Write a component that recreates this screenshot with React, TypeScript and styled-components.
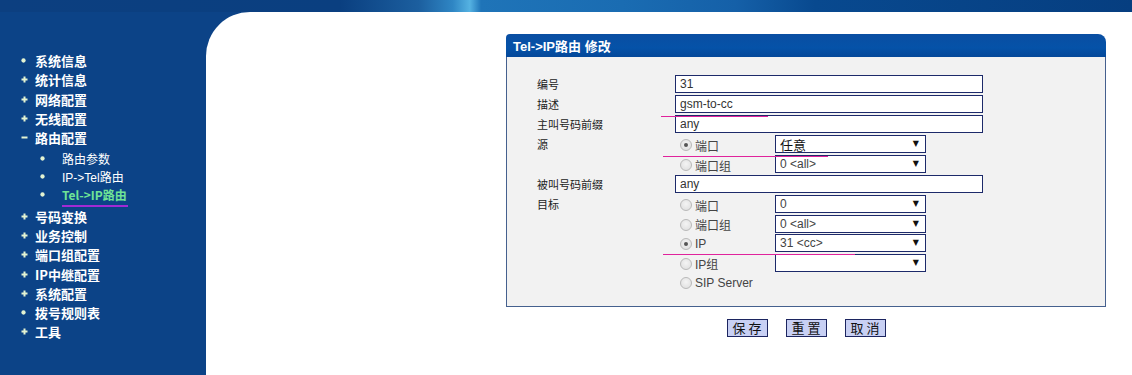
import React from 'react'
import styled, { createGlobalStyle } from 'styled-components'

const GlobalStyle = createGlobalStyle`
  html, body {
    margin: 0;
    padding: 0;
    background: #0c4387;
    overflow: hidden;
  }
  body {
    font-family: "Liberation Sans", "Noto Sans CJK SC", sans-serif;
  }
`

const Page = styled.div`
  display: flex;
  flex-direction: column;
  width: 1132px;
  height: 375px;
  background: #0c4387;
`

const Banner = styled.div`
  height: 12px;
  flex-shrink: 0;
  background: linear-gradient(
    90deg,
    #0c3f80 0%,
    #0a3f80 30%,
    #1c5f9f 37%,
    #2f86c4 40%,
    #55b2e2 41.5%,
    #1f74b8 42.5%,
    #1a6cb2 55%,
    #1560a8 65%,
    #08498f 72%,
    #063e80 100%
  );
`

const Main = styled.div`
  flex: 1;
  display: flex;
`

const Sidebar = styled.nav`
  width: 206px;
  flex-shrink: 0;
  padding-top: 39px;
  box-sizing: border-box;
`

const SubMenu = styled.div`
  padding: 2px 0 3px;
`

const NavItem = styled.div<{ $sub?: boolean; $active?: boolean }>`
  position: relative;
  display: flex;
  align-items: center;
  height: ${p => (p.$sub ? 18 : 19.3)}px;
  padding-left: ${p => (p.$sub ? 39 : 20)}px;
  color: ${p => (p.$active ? '#6fe396' : '#ffffff')};
  font-family: ${p => (p.$sub && !p.$active ? '"Liberation Sans", "Noto Sans CJK SC", sans-serif' : '"Noto Sans CJK SC", sans-serif')};
  font-size: ${p => (p.$sub ? 12 : 13)}px;
  font-weight: ${p => (p.$sub && !p.$active ? 400 : 700)};
  white-space: nowrap;
`

const Bullet = styled.span<{ $sub?: boolean }>`
  width: ${p => (p.$sub ? 22 : 14)}px;
  display: flex;
  align-items: center;
  justify-content: flex-start;
  padding-left: 1px;
`

const NavUnderline = styled.span`
  position: absolute;
  left: 62px;
  bottom: -4px;
  width: 66px;
  height: 2px;
  background: #a22ad4;
`

const Content = styled.main`
  flex: 1;
  background: #ffffff;
  border-top-left-radius: 44px;
  padding: 22px 0 0 300px;
  box-sizing: border-box;
`

const Panel = styled.section`
  width: 600px;
`

const PanelHeader = styled.div`
  height: 23px;
  display: flex;
  align-items: center;
  padding-left: 7px;
  color: #ffffff;
  font-family: "Liberation Sans", "Noto Sans CJK SC", sans-serif;
  font-weight: 700;
  font-size: 13px;
  background: linear-gradient(180deg, #0a4ea2 0%, #0552a8 60%, #04489a 100%);
  border-radius: 4px 8px 0 0;
`

const PanelBody = styled.div`
  position: relative;
  background: #f2f2f2;
  border: 1px solid #45608e;
  border-top: none;
  padding: 18px 0 13px 30px;
`

const FieldRow = styled.div`
  display: grid;
  grid-template-columns: 138px 308px;
  align-items: start;
`

const Label = styled.div`
  height: 20px;
  line-height: 18px;
  font-family: "Noto Sans CJK SC", sans-serif;
  font-size: 11px;
  color: #222;
`

const TextBox = styled.div`
  height: 18px;
  margin-bottom: 2px;
  box-sizing: border-box;
  border: 1px solid #1d2a6a;
  background: #fff;
  padding-left: 4px;
  font-size: 12px;
  line-height: 16px;
  color: #333;
`

const OptionList = styled.div`
  display: flex;
  flex-direction: column;
`

const OptionRow = styled.div<{ $tight?: boolean }>`
  display: grid;
  grid-template-columns: 100px 151px;
  height: ${p => (p.$tight ? 19.5 : 20)}px;
  align-items: start;
`

const RadioLabel = styled.label`
  display: flex;
  align-items: center;
  gap: 3px;
  height: 19px;
  padding-left: 5px;
  font-family: "Liberation Sans", "Noto Sans CJK SC", sans-serif;
  font-size: 12px;
  color: #444;
  padding-top: 1px;
  box-sizing: border-box;
`

const Radio = styled.span<{ $checked?: boolean }>`
  position: relative;
  width: 12px;
  height: 12px;
  border-radius: 50%;
  box-sizing: border-box;
  border: 1px solid #b9b9b9;
  background: radial-gradient(circle at 50% 40%, #f4f4f4 0%, #dcdcdc 100%);

  &::after {
    content: '';
    display: ${p => (p.$checked ? 'block' : 'none')};
    position: absolute;
    left: 3px;
    top: 3px;
    width: 4px;
    height: 4px;
    border-radius: 50%;
    background: #555;
  }
`

const SelectBox = styled.div<{ $big?: boolean }>`
  height: 18px;
  box-sizing: border-box;
  border: 1px solid #1d2a6a;
  background: #fff;
  display: flex;
  align-items: center;
  justify-content: space-between;
  padding: 0 6px 0 4px;
  font-family: ${p => (p.$big ? '"Noto Sans CJK SC", sans-serif' : '"Liberation Sans", "Noto Sans CJK SC", sans-serif')};
  font-size: ${p => (p.$big ? 13 : 12)}px;
  color: ${p => (p.$big ? '#111' : '#444')};
`

const Arrow = styled.span`
  font-family: "DejaVu Sans", sans-serif;
  font-size: 8px;
  line-height: 8px;
  color: #111;
`

const Mark = styled.span`
  position: absolute;
  z-index: 2;
  height: 1px;
  background: #e0239c;
`

const Buttons = styled.div`
  width: 600px;
  display: flex;
  justify-content: center;
  gap: 18px;
  margin-top: 12px;
`

const Button = styled.button`
  width: 41px;
  height: 18px;
  padding: 0;
  border: 1px solid #1c2560;
  background: #c8d0f4;
  font-family: "Noto Sans CJK SC", sans-serif;
  font-size: 13px;
  line-height: 15px;
  letter-spacing: 3px;
  text-indent: 3px;
  color: #111;
`

const PlusIcon = () => (
  <svg width="7" height="7" viewBox="0 0 7 7">
    <path d="M3.5 0.5v6M0.5 3.5h6" stroke="#e4f4d2" strokeWidth="2" />
  </svg>
)

const MinusIcon = () => (
  <svg width="7" height="7" viewBox="0 0 7 7">
    <path d="M0.5 3.5h6" stroke="#e4f4d2" strokeWidth="2" />
  </svg>
)

const DotIcon = ({ size = 5 }: { size?: number }) => (
  <svg width={size} height={size} viewBox="0 0 6 6">
    <circle cx="3" cy="3" r="2.6" fill="#e4f4d2" />
  </svg>
)

type Nav = { text: string; icon: 'plus' | 'minus' | 'dot'; children?: { text: string; active?: boolean }[] }

const nav: Nav[] = [
  { text: '系统信息', icon: 'dot' },
  { text: '统计信息', icon: 'plus' },
  { text: '网络配置', icon: 'plus' },
  { text: '无线配置', icon: 'plus' },
  {
    text: '路由配置',
    icon: 'minus',
    children: [{ text: '路由参数' }, { text: 'IP->Tel路由' }, { text: 'Tel->IP路由', active: true }],
  },
  { text: '号码变换', icon: 'plus' },
  { text: '业务控制', icon: 'plus' },
  { text: '端口组配置', icon: 'plus' },
  { text: 'IP中继配置', icon: 'plus' },
  { text: '系统配置', icon: 'plus' },
  { text: '拨号规则表', icon: 'dot' },
  { text: '工具', icon: 'plus' },
]

const icons = { plus: <PlusIcon />, minus: <MinusIcon />, dot: <DotIcon /> }

type Option = { label: string; checked?: boolean; value?: string; big?: boolean; select?: boolean }

const sourceOptions: Option[] = [
  { label: '端口', checked: true, value: '任意', big: true, select: true },
  { label: '端口组', value: '0 <all>', select: true },
]

const targetOptions: Option[] = [
  { label: '端口', value: '0', select: true },
  { label: '端口组', value: '0 <all>', select: true },
  { label: 'IP', checked: true, value: '31 <cc>', select: true },
  { label: 'IP组', value: '', select: true },
  { label: 'SIP Server' },
]

const Options = ({ items, tight }: { items: Option[]; tight?: boolean }) => (
  <OptionList>
    {items.map(o => (
      <OptionRow key={o.label} $tight={tight}>
        <RadioLabel>
          <Radio $checked={o.checked} />
          {o.label}
        </RadioLabel>
        {o.select && (
          <SelectBox $big={o.big}>
            <span>{o.value}</span>
            <Arrow>▼</Arrow>
          </SelectBox>
        )}
      </OptionRow>
    ))}
  </OptionList>
)

export default function App() {
  return (
    <Page>
      <GlobalStyle />
      <Banner />
      <Main>
        <Sidebar>
          {nav.map(item => (
            <React.Fragment key={item.text}>
              <NavItem>
                <Bullet>{icons[item.icon]}</Bullet>
                {item.text}
              </NavItem>
              {item.children && (
                <SubMenu>
                  {item.children.map(c => (
                    <NavItem key={c.text} $sub $active={c.active}>
                      <Bullet $sub>
                        <DotIcon size={5} />
                      </Bullet>
                      {c.text}
                      {c.active && <NavUnderline />}
                    </NavItem>
                  ))}
                </SubMenu>
              )}
            </React.Fragment>
          ))}
        </Sidebar>
        <Content>
          <Panel>
            <PanelHeader>Tel-&gt;IP路由 修改</PanelHeader>
            <PanelBody>
              <FieldRow>
                <Label>编号</Label>
                <TextBox>31</TextBox>
              </FieldRow>
              <FieldRow>
                <Label>描述</Label>
                <TextBox>gsm-to-cc</TextBox>
              </FieldRow>
              <FieldRow>
                <Label>主叫号码前缀</Label>
                <TextBox>any</TextBox>
              </FieldRow>
              <FieldRow>
                <Label>源</Label>
                <Options items={sourceOptions} />
              </FieldRow>
              <FieldRow>
                <Label>被叫号码前缀</Label>
                <TextBox>any</TextBox>
              </FieldRow>
              <FieldRow>
                <Label>目标</Label>
                <Options items={targetOptions} tight />
              </FieldRow>
              <Mark style={{ top: 59, left: 154, width: 107 }} />
              <Mark style={{ top: 99, left: 156, width: 165 }} />
              <Mark style={{ top: 197, left: 156, width: 192 }} />
            </PanelBody>
          </Panel>
          <Buttons>
            <Button>保存</Button>
            <Button>重置</Button>
            <Button>取消</Button>
          </Buttons>
        </Content>
      </Main>
    </Page>
  )
}
